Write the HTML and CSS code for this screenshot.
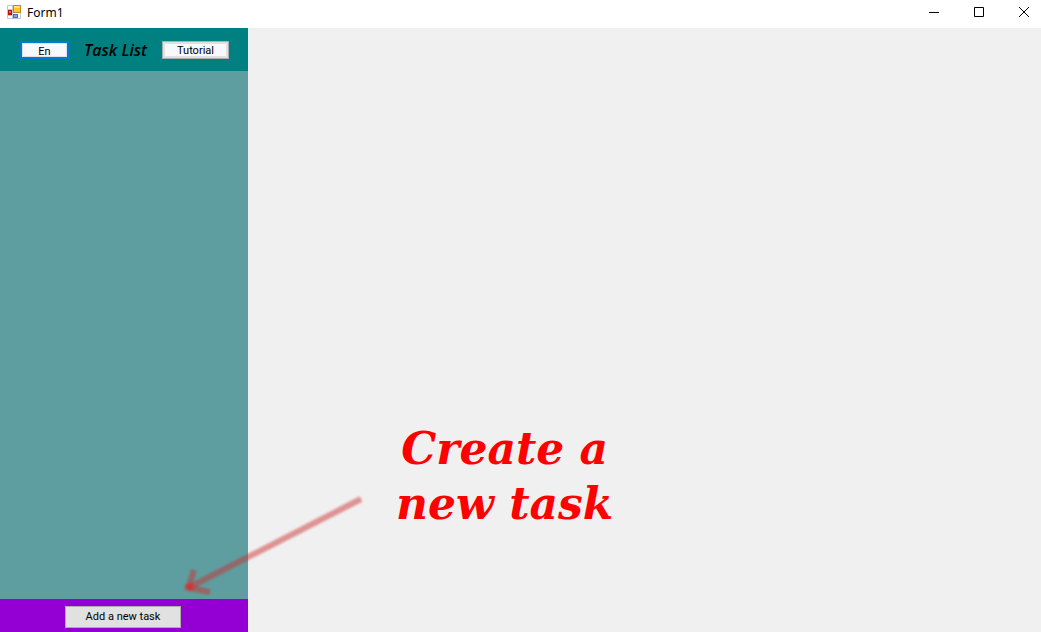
FILE: index.html
```html
<!DOCTYPE html>
<html lang="en">
<head>
<meta charset="utf-8">
<title>Form1</title>
<link rel="stylesheet" href="styles.css">
</head>
<body>
<header class="titlebar">
  <svg class="app-icon" width="14" height="14" viewBox="0 0 14 14" aria-hidden="true">
    <path d="M.5.5h13v13H.5zM5.5.5v13M.5 4.5h5M.5 10.5h5" fill="#fff" stroke="#c3c6cf"/>
    <rect x="6" y="0" width="8" height="8" fill="#c98a1b"/>
    <rect x="7" y="1" width="6" height="6" fill="#ffc62e"/>
    <path d="M7 1h6v2H7z" fill="#ffe17d"/>
    <rect x="1" y="5" width="4" height="5" fill="#b3120d"/>
    <rect x="2" y="6" width="2" height="2" fill="#ef6250"/>
    <rect x="6" y="9" width="5" height="4" fill="#3f72d0"/>
    <rect x="7" y="10" width="3" height="2" fill="#79a5ee"/>
  </svg>
  <h1 class="title">Form1</h1>
  <div class="controls">
    <button class="control" type="button" aria-label="Minimize"><svg width="10" height="10" viewBox="0 0 10 10"><path d="M0 5.5h10"/></svg></button>
    <button class="control" type="button" aria-label="Maximize"><svg width="10" height="10" viewBox="0 0 10 10"><path d="M.5.5h9v9h-9z"/></svg></button>
    <button class="control close" type="button" aria-label="Close"><svg width="10" height="10" viewBox="0 0 10 10"><path d="M0 0l10 10M10 0L0 10"/></svg></button>
  </div>
</header>
<div class="window">
  <aside class="sidebar">
    <div class="toolbar">
      <button class="button language" type="button">En</button>
      <h2 class="heading">Task List</h2>
      <button class="button tutorial" type="button">Tutorial</button>
    </div>
    <div class="tasks"></div>
    <div class="footer">
      <button class="button add" type="button">Add a new task</button>
    </div>
  </aside>
  <main class="content">
    <p class="hint">Create a<br>new task</p>
  </main>
  <svg class="arrow" width="186" height="104" viewBox="0 0 186 104" aria-hidden="true">
    <g fill="none" stroke="#cc2c2c" stroke-opacity=".48">
      <path d="M181 8L8 97" stroke-width="6"/>
      <path d="M14 79L8 98" stroke-width="6"/>
      <path d="M5 96L30 101" stroke-width="6"/>
    </g>
    <circle cx="10" cy="96" r="4" fill="#e03030" fill-opacity=".5"/>
  </svg>
</div>
</body>
</html>
```
FILE: styles.css
```css
* { box-sizing: border-box; }

body {
  display: flex;
  flex-direction: column;
  min-height: 100vh;
  margin: 0;
  background: #f0f0f0;
  color: #000;
  font: 12px/16px "Noto Sans", "Open Sans", sans-serif;
}

.titlebar {
  display: flex;
  align-items: center;
  height: 28px;
  padding-left: 7px;
  background: #fff;
}

.app-icon { margin-bottom: 4px; }

.title {
  flex: 1;
  margin: 0 0 2px 6px;
  font-size: 12px;
  font-weight: 400;
}

.controls { display: flex; align-self: stretch; }

.control {
  display: flex;
  align-items: center;
  justify-content: center;
  width: 45px;
  padding: 0 0 4px;
  border: 0;
  background: none;
}

.close {
  width: 40px;
  padding-left: 6px;
}

.control svg { fill: none; stroke: #000; }

.window {
  position: relative;
  display: flex;
  flex: 1;
}

.sidebar {
  display: flex;
  flex-direction: column;
  width: 248px;
  background: #5f9ea0;
}

.toolbar {
  display: flex;
  align-items: center;
  justify-content: space-between;
  height: 43px;
  padding: 0 19px 0 20px;
  background: #008080;
}

.button {
  padding: 0;
  border: 1px solid #adadad;
  background: #e1e1e1;
  color: #000;
  font: 11px/14px Roboto, "Liberation Sans", sans-serif;
}

.language,
.tutorial {
  height: 18px;
  padding-top: 2px;
  background: #f8f8ff;
}

.language {
  width: 49px;
  border: 2px solid #0078d7;
  box-shadow: inset 0 0 0 1px #e1e1e1;
}

.tutorial {
  width: 67px;
  box-shadow: inset 0 0 0 2px #e1e1e1;
}

.heading {
  margin: 0;
  font: italic 600 16px/20px "Open Sans", "Noto Sans", sans-serif;
}

.tasks { flex: 1; }

.footer {
  display: flex;
  justify-content: center;
  height: 33px;
  padding: 7px 2px 4px 0;
  background: #9400d3;
}

.add { width: 116px; }

.content {
  display: flex;
  flex: 1;
  align-items: flex-end;
  padding: 0 0 101px 148px;
}

.hint {
  margin: 0;
  color: #f00;
  font: italic bold 44px/55px "DejaVu Serif", serif;
  text-align: center;
}

.arrow {
  position: absolute;
  bottom: 37px;
  left: 180px;
  filter: blur(1px);
  pointer-events: none;
}
```
